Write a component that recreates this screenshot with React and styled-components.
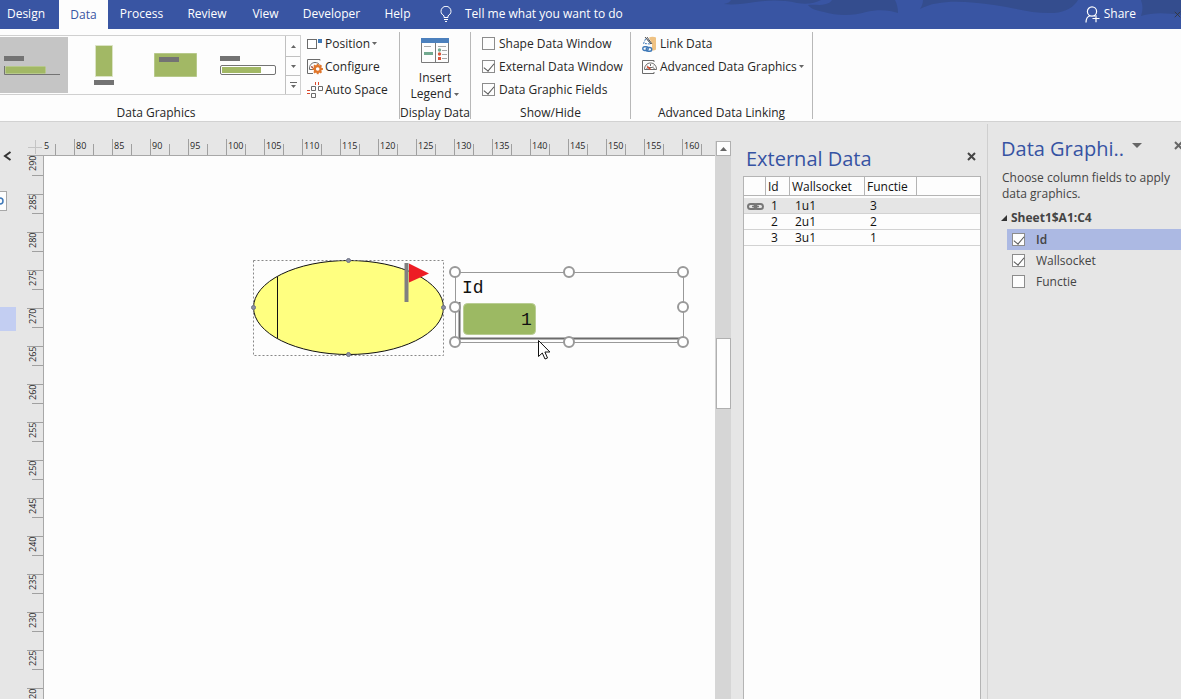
import React, { useState } from 'react';
import styled, { createGlobalStyle, css } from 'styled-components';

const GlobalStyle = createGlobalStyle`
  * {
    box-sizing: border-box;
  }

  body {
    margin: 0;
    background: #e6e6e6;
    color: #262626;
    font-family: 'Open Sans', 'Noto Sans', sans-serif;
    font-size: 12px;
    line-height: 16px;
    overflow: hidden;
  }

  button {
    border: 0;
    padding: 0;
    background: none;
    color: inherit;
    font: inherit;
    white-space: nowrap;
  }
`;

const Window = styled.div`
  display: flex;
  flex-direction: column;
  height: 100vh;
`;

const TopBar = styled.header`
  position: relative;
  display: flex;
  height: 29px;
  flex: none;
  background: #3955a3;
  color: #fff;
`;

const Swirls = styled.svg`
  position: absolute;
  top: 0;
  right: 0;
`;

const TabList = styled.nav`
  display: flex;
`;

const Tab = styled.button`
  width: ${({ $width }) => $width}px;
  height: 28px;
  text-align: center;

  ${({ $active }) =>
    $active &&
    css`
      height: 29px;
      background: #fdfdfd;
      color: #3955a3;
    `}

  &:first-child {
    margin-right: 7px;
  }
`;

const TellMe = styled.button`
  display: flex;
  align-items: center;
  gap: 13px;
  height: 28px;
  margin-left: 16px;
`;

const Share = styled.button`
  position: relative;
  display: flex;
  align-items: center;
  gap: 4px;
  height: 28px;
  margin-left: auto;
  margin-right: 38px;
`;

const CornerClose = styled.button`
  position: relative;
  display: flex;
  align-items: center;
  width: 7px;
  height: 28px;
  overflow: hidden;
`;

const Ribbon = styled.section`
  display: flex;
  flex: none;
  height: 93px;
  padding-top: 3px;
  border-bottom: 1px solid #d2d2d2;
  background: #fdfdfd;
`;

const Group = styled.div`
  display: flex;
  flex-direction: column;
  justify-content: space-between;
  width: ${({ $width }) => $width}px;
  height: 87px;
  border-right: 1px solid #b8b8b8;
`;

const GroupBody = styled.div`
  display: flex;
`;

const GroupLabel = styled.div`
  height: 13px;
  width: ${({ $width }) => ($width ? `${$width}px` : 'auto')};
  line-height: 13px;
  text-align: center;
  white-space: nowrap;
`;

const Commands = styled.div`
  display: flex;
  flex-direction: column;
  padding-left: ${({ $indent }) => $indent}px;
`;

const Command = styled.button`
  display: flex;
  align-items: center;
  gap: 2px;
  height: 23px;
`;

const Gallery = styled.div`
  display: flex;
  height: 60px;
  margin-top: 3px;
  border: 1px solid #d0d0d0;
  border-left: 0;
`;

const GalleryItem = styled.button`
  display: flex;
  width: ${({ $width }) => $width}px;
  margin: 1px 0;
  background: ${({ $active }) => ($active ? '#c5c5c5' : 'none')};
`;

const Spinner = styled.div`
  display: grid;
  grid-template-rows: 20px 19px 19px;
  width: 15px;
  border-left: 1px solid #c0c0c0;
`;

const SpinButton = styled.button`
  display: flex;
  align-items: center;
  justify-content: center;

  & + & {
    border-top: 1px solid #c0c0c0;
  }
`;

const LegendButton = styled.button`
  display: flex;
  flex-direction: column;
  align-items: center;
  width: 100%;
  padding-top: 6px;
`;

const LegendText = styled.span`
  display: flex;
  align-items: center;
  gap: 3px;
  margin-top: ${({ $top }) => $top || 0}px;
`;

const CheckLabel = styled.label`
  display: flex;
  align-items: center;
  gap: ${({ $gap }) => $gap || 4}px;
  height: ${({ $height }) => $height || 23}px;
  white-space: nowrap;
`;

const CheckBox = styled.input`
  appearance: none;
  display: flex;
  justify-content: center;
  width: 13px;
  height: 13px;
  flex: none;
  margin: 0;
  border: 1px solid #8c8c8c;
  background: #fdfdfd;

  &:checked::before {
    content: '';
    width: 5px;
    height: 9px;
    border: solid #555;
    border-width: 0 1px 1px 0;
    transform: rotate(40deg);
  }
`;

const Workspace = styled.main`
  display: flex;
  flex: 1;
  min-height: 0;
`;

const ShapesStrip = styled.aside`
  display: flex;
  flex-direction: column;
  align-items: flex-start;
  width: 27px;
  flex: none;
  padding-top: 29px;
`;

const ExpandButton = styled.button`
  display: flex;
  padding-left: 3px;
`;

const SearchStub = styled.button`
  display: flex;
  align-items: center;
  width: 7px;
  height: 20px;
  margin-top: 30px;
  border: 1px solid #a8a8a8;
  border-left: 0;
  background: #fdfdfd;
`;

const StencilStub = styled.div`
  width: 16px;
  height: 24px;
  margin-top: 96px;
  background: #c3cef2;
`;

const Drawing = styled.section`
  display: grid;
  grid-template-columns: 17px 1fr;
  grid-template-rows: 34px 1fr;
  flex: 1;
  min-width: 0;
  min-height: 0;
`;

const RulerCorner = styled.div`
  display: flex;
  align-items: flex-end;
  border-bottom: 1px solid #a8a8a8;
`;

const TopRuler = styled.div`
  display: flex;
  align-items: flex-end;
  height: 34px;
  overflow: hidden;
  border-bottom: 1px solid #a8a8a8;
  font-size: 9px;
  line-height: 14px;
`;

const TopMajor = styled.div`
  flex: none;
  width: 19px;
  height: 16px;
  padding-left: 1px;
  border-left: 1px solid #a0a0a0;

  &:first-child {
    width: 11px;
    padding-left: 0;
    border-left: 0;
  }
`;

const TopMinor = styled.div`
  flex: none;
  width: 19px;
  height: 11px;
  border-left: 1px solid #a0a0a0;
`;

const SideRuler = styled.div`
  display: flex;
  flex-direction: column;
  align-items: flex-end;
  min-height: 0;
  overflow: hidden;
  border-right: 1px solid #a8a8a8;
  font-size: 9px;
  line-height: 12px;
`;

const SideMajor = styled.div`
  display: flex;
  flex: none;
  width: 16px;
  height: 19px;
  border-top: 1px solid #a0a0a0;

  &:first-child {
    border-top: 0;
  }
`;

const SideText = styled.span`
  height: 18px;
  writing-mode: vertical-rl;
  transform: rotate(180deg);
  text-align: right;
`;

const SideMinor = styled.div`
  flex: none;
  width: 11px;
  height: 19px;
  border-top: 1px solid #a0a0a0;
`;

const Canvas = styled.div`
  position: relative;
  overflow: hidden;
  background: #fdfdfd;
`;

const CanvasDrawing = styled.svg`
  position: absolute;
  left: 200px;
  top: 96px;
`;

const CanvasText = styled.span`
  position: absolute;
  left: ${({ $left }) => $left}px;
  top: ${({ $top }) => $top}px;
  color: #111;
  font-family: 'Liberation Mono', monospace;
  font-size: 18px;
  line-height: 24px;
`;

const ScrollBar = styled.div`
  display: flex;
  flex-direction: column;
  width: 16px;
  flex: none;
  margin-top: 19px;
  padding-left: 1px;
  background: #d6d6d6;
`;

const ScrollArrow = styled.button`
  display: flex;
  align-items: center;
  justify-content: center;
  height: 15px;
  border: 1px solid #b0b0b0;
  background: #fdfdfd;
`;

const ScrollThumb = styled.div`
  height: 71px;
  margin-top: 182px;
  border: 1px solid #b0b0b0;
  background: #fdfdfd;
`;

const DataPane = styled.aside`
  display: flex;
  flex-direction: column;
  width: 238px;
  flex: none;
  margin-left: 12px;
`;

const PaneHeader = styled.div`
  display: flex;
  align-items: center;
  justify-content: space-between;
  height: 54px;
  padding: 19px 5px 0 3px;
`;

const PaneTitle = styled.h2`
  margin: 0;
  color: #3653a3;
  font-size: 20px;
  font-weight: 400;
  line-height: 28px;
  white-space: nowrap;
`;

const IconButton = styled.button`
  display: flex;
  align-items: center;
`;

const PaneClose = styled(IconButton)`
  padding-bottom: 5px;
`;

const TableFrame = styled.div`
  flex: 1;
  border: 1px solid #b4b4b4;
  border-bottom: 0;
  background: #fdfdfd;
`;

const DataTable = styled.table`
  width: 100%;
  border-spacing: 0;
  table-layout: fixed;
  color: #111;
  line-height: 15px;

  th {
    height: 19px;
    padding: 0 0 0 2px;
    border-right: 1px solid #b4b4b4;
    border-bottom: 1px solid #b4b4b4;
    font-weight: 400;
    text-align: left;
  }

  th:last-child {
    border-right: 0;
  }

  tbody::before {
    content: '';
    display: table-row;
    height: 2px;
  }

  td {
    height: 16px;
    padding: 0 0 0 5px;
    border-bottom: 1px solid #d2d2d2;
  }

  td:first-child {
    padding-left: 3px;
  }
`;

const Row = styled.tr`
  background: ${({ $linked }) => ($linked ? '#e5e5e5' : 'transparent')};
`;

const Column = styled.col`
  width: ${({ $width }) => ($width ? `${$width}px` : 'auto')};
`;

const FieldsPane = styled.aside`
  width: 194px;
  flex: none;
  margin: 2px 0 0 6px;
  padding-top: 11px;
  border-left: 1px solid #cfcfcf;
  overflow: hidden;
  color: #444;
`;

const FieldsHeader = styled.div`
  display: flex;
  align-items: flex-start;
  padding-left: 13px;
`;

const HeaderButtons = styled.div`
  display: flex;
  gap: 32px;
  margin-left: auto;
  margin-right: -2px;
  padding-top: 6px;
`;

const Hint = styled.p`
  margin: 7px 8px 7px 14px;
`;

const Source = styled.button`
  display: flex;
  align-items: center;
  gap: 4px;
  height: 18px;
  margin-left: 13px;
  font-weight: 700;
`;

const FieldRow = styled.div`
  height: 21px;
  margin-left: 19px;
  padding-left: 5px;
  background: ${({ $active }) => ($active ? '#acb9e3' : 'none')};
  font-weight: ${({ $active }) => ($active ? 600 : 400)};
`;

const FieldList = styled.div`
  padding-top: 2px;
`;

const Caret = ({ size = 5, color = '#666' }) => (
  <svg width={size} height={Math.ceil(size / 2)} viewBox="0 0 10 5" preserveAspectRatio="none">
    <path d="M0 0h10L5 5z" fill={color} />
  </svg>
);

const UpCaret = () => (
  <svg width="7" height="4" viewBox="0 0 7 4">
    <path d="M0 4h7L3.500 0z" fill="#666" />
  </svg>
);

const CloseIcon = ({ color = '#444', weight = 2 }) => (
  <svg width="9" height="9" viewBox="0 0 9 9">
    <path d="M1 1l7 7M8 1L1 8" stroke={color} strokeWidth={weight} />
  </svg>
);

const BulbIcon = () => (
  <svg width="12" height="16" viewBox="0 0 12 16" fill="none" stroke="#fff">
    <path d="M4 11.500V9.800C2.400 8.800 1 7.500 1 5.300a5 5 0 0 1 10 0c0 2.200-1.400 3.500-3 4.500v1.700zM4 13.500h4M5 15.500h2" />
  </svg>
);

const PersonIcon = () => (
  <svg width="15" height="17" viewBox="0 0 15 17" fill="none" stroke="#fff" strokeWidth="1.200">
    <circle cx="7" cy="5.500" r="4.600" />
    <path d="M1 16.500c0-3.500 1.400-6 4-6.800M9 9.500l1 .8M7.500 12.500h7M11 9.200v7" />
  </svg>
);

const PositionIcon = () => (
  <svg width="16" height="16" viewBox="0 0 16 16">
    <rect x=".5" y="3.500" width="9" height="9" fill="#fff" stroke="#6b6b6b" />
    <path d="M11 3h4v4h-4z" fill="#3f79b8" />
  </svg>
);

const GEAR = Array.from({ length: 8 }, (_, i) => i * 45);

const ConfigureIcon = () => (
  <svg width="16" height="16" viewBox="0 0 16 16" fill="none">
    <path d="M13 1.500V.5H.5v14H6" stroke="#6b6b6b" />
    <path d="M2.500 10.500C2 6 5 3.500 8 3.500c2 0 3.500.8 4.500 2M2.500 10.500H6M4 7.500l3 2" stroke="#6b6b6b" />
    <path d="M4 8h2" stroke="#d8492c" />
    <g fill="#e0762b">
      {GEAR.map((angle) => (
        <path key={angle} d="M9.700 4.800h2v3h-2z" transform={`rotate(${angle} 10.700 10)`} />
      ))}
    </g>
    <circle cx="10.700" cy="10" r="2.900" fill="#fff" stroke="#e0762b" strokeWidth="2.200" />
  </svg>
);

const AutoSpaceIcon = () => (
  <svg width="16" height="16" viewBox="0 0 16 16" fill="none">
    <path d="M4.500 4.500h4v4h-4zM11.500 4.500h4v4h-4zM4.500 11.500h4v4h-4z" stroke="#6b6b6b" />
    <path d="M8.500 0v3M11.500 0v3M0 8.500h3M0 11.500h3" stroke="#d8492c" />
  </svg>
);

const LegendIcon = () => (
  <svg width="28" height="26" viewBox="0 0 28 26">
    <path d="M.5.5h27v24H.5zM14.500 5v19" fill="#fdfdfd" stroke="#7a7a7a" />
    <path d="M0 0h28v5H0z" fill="#4c80bd" />
    <path d="M3 8.500h7M17 8.500h8M21 12.500h5M21 16.500h5M21 20.500h5" stroke="#a8a8a8" />
    <path d="M3 14h9v3H3z" fill="#72a98f" />
    <circle cx="18.500" cy="12" r="1.700" fill="#72a98f" />
    <circle cx="18.500" cy="16" r="1.700" fill="#d8553a" />
    <path d="M17 19h3v3h-3z" fill="#d8553a" />
  </svg>
);

const LinkDataIcon = () => (
  <svg width="16" height="16" viewBox="0 0 16 16" fill="none">
    <path d="M7 1.500c2-1 5-1 7 0v12c-1 .8-2 1-4 1V8z" fill="#efc283" />
    <path d="M1.500 7.500L4 2l5 6z" stroke="#3f79b8" strokeDasharray="2 1" />
    <path d="M3 1l6 7M5 1l5 7" stroke="#555" />
    <rect x=".8" y="10.800" width="5.400" height="3.700" rx="1.800" stroke="#3f79b8" strokeWidth="1.400" />
    <rect x="4.300" y="11.500" width="5.400" height="3.700" rx="1.800" stroke="#3f79b8" strokeWidth="1.400" />
  </svg>
);

const GaugeIcon = () => (
  <svg width="16" height="16" viewBox="0 0 16 16" fill="none">
    <path d="M12 3V1.500H.5v13H12V13" stroke="#6b6b6b" />
    <path d="M2.500 10.500c0-4 2.500-6.500 6-6.500s6 2.500 6 6.500z" fill="#fff" stroke="#6b6b6b" />
    <path d="M4.500 10.500c0-1 1-2 2-2h4c1 0 2 1 2 2M8.500 5v2M5 6.500l1 1M12 6.500l-1 1" stroke="#6b6b6b" />
    <path d="M5 7.500l3.500 2.800" stroke="#d8492c" strokeWidth="1.500" />
  </svg>
);

const ChainIcon = () => (
  <svg width="17" height="7" viewBox="0 0 17 7" fill="none" stroke="#777">
    <rect x="1" y="1" width="8.500" height="5" rx="2.500" strokeWidth="2" />
    <rect x="7.500" y="1" width="8.500" height="5" rx="2.500" strokeWidth="2" />
    <path d="M5 3.500h7" strokeWidth="1.500" />
  </svg>
);

const GALLERY_ITEMS = [
  {
    name: 'Bar with baseline',
    width: 68,
    art: (
      <>
        <path d="M4 19h20v5H4z" fill="#737373" />
        <path d="M4.500 29v8.500H60" fill="none" stroke="#737373" />
        <rect x="5.500" y="29.500" width="40" height="7" rx="1" fill="#a2b865" stroke="#b7c98b" />
      </>
    ),
  },
  {
    name: 'Column',
    width: 72,
    art: (
      <>
        <path d="M27.500 8.500h17v31h-17z" fill="#a2b865" stroke="#dbe3c4" />
        <path d="M26 43h20v5H26z" fill="#737373" />
      </>
    ),
  },
  {
    name: 'Block',
    width: 72,
    art: (
      <>
        <path d="M14.500 16.500h42v23h-42z" fill="#a2b865" stroke="#b7c98b" />
        <path d="M19 20h20v5H19z" fill="#737373" />
      </>
    ),
  },
  {
    name: 'Progress bar',
    width: 73,
    art: (
      <>
        <path d="M8 19h20v5H8z" fill="#737373" />
        <rect x="8.500" y="28.500" width="55" height="9" rx="1.500" fill="#fff" stroke="#737373" />
        <path d="M10 30h39v6H10z" fill="#a2b865" />
      </>
    ),
  },
];

const TABS = [
  { name: 'Design', width: 52 },
  { name: 'Data', width: 49 },
  { name: 'Process', width: 67 },
  { name: 'Review', width: 64 },
  { name: 'View', width: 53 },
  { name: 'Developer', width: 79 },
  { name: 'Help', width: 53 },
];

const TOP_VALUES = Array.from({ length: 17 }, (_, i) => 80 + i * 5);
const SIDE_VALUES = Array.from({ length: 14 }, (_, i) => 290 - i * 5);

const RECORDS = [
  { id: 1, wallsocket: '1u1', functie: 3, linked: true },
  { id: 2, wallsocket: '2u1', functie: 2 },
  { id: 3, wallsocket: '3u1', functie: 1 },
];

const HANDLES = [
  [211, 20],
  [325, 20],
  [439, 20],
  [211, 55],
  [439, 55],
  [211, 90],
  [325, 90],
  [439, 90],
];

const ANCHORS = [
  [104.5, 8.5],
  [9.5, 55.5],
  [199.5, 55.5],
  [104.5, 102.5],
];

const Diagram = () => (
  <CanvasDrawing width="460" height="120" viewBox="0 0 460 120" fill="none">
    <ellipse cx="104.500" cy="55.500" rx="95" ry="47" fill="#ffff80" stroke="#111" />
    <path d="M33.500 25v61" stroke="#111" />
    <path d="M9.500 8.500h190v95H9.500z" stroke="#888" strokeDasharray="2 2" />
    <path d="M160.500 11h4v39h-4z" fill="#808080" />
    <path d="M165 11.500l20 10-20 9z" fill="#ed1c24" />
    {ANCHORS.map(([x, y]) => (
      <circle key={`${x}-${y}`} cx={x} cy={y} r="2" fill="#8d91a3" stroke="#6d7184" />
    ))}
    <path d="M211.500 20.500h228v70h-228z" stroke="#999" />
    <path d="M215.500 50v36.500H439" stroke="#6b6b6b" strokeWidth="2" />
    <rect x="219.500" y="51.500" width="72" height="31" rx="4" fill="#9cb963" stroke="#b9cd93" />
    {HANDLES.map(([x, y]) => (
      <circle key={`${x}-${y}`} cx={x} cy={y} r="5" fill="#fff" stroke="#999" strokeWidth="2" />
    ))}
    <path
      d="M294.500 88.500v16l3.800-3.500 2.700 6 2.500-1-2.600-6h5z"
      fill="#fff"
      stroke="#111"
    />
  </CanvasDrawing>
);

const App = () => {
  const [windows, setWindows] = useState({
    'Shape Data Window': false,
    'External Data Window': true,
    'Data Graphic Fields': true,
  });
  const [fields, setFields] = useState({ Id: true, Wallsocket: true, Functie: false });

  return (
    <>
      <GlobalStyle />
      <Window>
        <TopBar>
          <Swirls width="470" height="29" viewBox="0 0 470 29" fill="#344d8e">
            <path d="M13 4c4-1 6-2 7-4h90c-6 3-14 5-24 3-14-3-28-3-42-1-12 2-22 3-31 2z" />
            <path d="M97 5c6-1 12 1 18-1 3-1 5-2 6-4h63c2 4 3 8 3 13-8-3-20-4-32-1-12 4-30 4-42 0-10-2-14-4-16-7z" />
            <path d="M209 9c2-3 3-6 3-9h155c-4 7-12 12-24 13-22 1-38-5-60-8-28-4-56-6-74 4z" />
            <path d="M430 16c2-6 2-10 0-16h40v15c-14-2-28-3-40 1z" />
          </Swirls>
          <TabList>
            {TABS.map((tab) => (
              <Tab key={tab.name} $width={tab.width} $active={tab.name === 'Data'}>
                {tab.name}
              </Tab>
            ))}
          </TabList>
          <TellMe>
            <BulbIcon />
            Tell me what you want to do
          </TellMe>
          <Share>
            <PersonIcon />
            Share
          </Share>
          <CornerClose aria-label="Close">
            <CloseIcon color="#333" weight={1} />
          </CornerClose>
        </TopBar>

        <Ribbon>
          <Group $width={400}>
            <GroupBody>
              <Gallery>
                {GALLERY_ITEMS.map((item, index) => (
                  <GalleryItem key={item.name} aria-label={item.name} $width={item.width} $active={index === 0}>
                    <svg width={item.width} height="56" viewBox={`0 0 ${item.width} 56`}>
                      {item.art}
                    </svg>
                  </GalleryItem>
                ))}
                <Spinner>
                  <SpinButton aria-label="Previous row">
                    <svg width="5" height="3" viewBox="0 0 10 6">
                      <path d="M0 6h10L5 0z" fill="#666" />
                    </svg>
                  </SpinButton>
                  <SpinButton aria-label="Next row">
                    <Caret />
                  </SpinButton>
                  <SpinButton aria-label="More">
                    <svg width="7" height="7" viewBox="0 0 7 7">
                      <path d="M0 0h7v1H0zM1 3h5L3.500 6z" fill="#666" />
                    </svg>
                  </SpinButton>
                </Spinner>
              </Gallery>
              <Commands $indent={6}>
                <Command>
                  <PositionIcon />
                  Position
                  <Caret />
                </Command>
                <Command>
                  <ConfigureIcon />
                  Configure
                </Command>
                <Command>
                  <AutoSpaceIcon />
                  Auto Space
                </Command>
              </Commands>
            </GroupBody>
            <GroupLabel $width={312}>Data Graphics</GroupLabel>
          </Group>

          <Group $width={71}>
            <LegendButton>
              <LegendIcon />
              <LegendText $top={6}>Insert</LegendText>
              <LegendText>
                Legend <Caret />
              </LegendText>
            </LegendButton>
            <GroupLabel>Display Data</GroupLabel>
          </Group>

          <Group $width={160}>
            <Commands $indent={11}>
              {Object.keys(windows).map((name) => (
                <CheckLabel key={name}>
                  <CheckBox
                    type="checkbox"
                    checked={windows[name]}
                    onChange={() => setWindows({ ...windows, [name]: !windows[name] })}
                  />
                  {name}
                </CheckLabel>
              ))}
            </Commands>
            <GroupLabel>Show/Hide</GroupLabel>
          </Group>

          <Group $width={182}>
            <Commands $indent={11}>
              <Command>
                <LinkDataIcon />
                Link Data
              </Command>
              <Command>
                <GaugeIcon />
                Advanced Data Graphics
                <Caret />
              </Command>
            </Commands>
            <GroupLabel>Advanced Data Linking</GroupLabel>
          </Group>
        </Ribbon>

        <Workspace>
          <ShapesStrip>
            <ExpandButton aria-label="Expand shapes">
              <svg width="9" height="10" viewBox="0 0 9 10" fill="none">
                <path d="M7.500 1L2 5l5.500 4" stroke="#333" strokeWidth="2" />
              </svg>
            </ExpandButton>
            <SearchStub aria-label="Search shapes">
              <svg width="4" height="8" viewBox="0 0 4 8" fill="none">
                <path d="M0 1c2 0 3 1 3 3S2 7 0 7" stroke="#3f79b8" strokeWidth="1.500" />
              </svg>
            </SearchStub>
            <StencilStub />
          </ShapesStrip>

          <Drawing>
            <RulerCorner>
              <svg width="17" height="16" viewBox="0 0 17 16">
                <path d="M1 8.500h14M8.500 1v14" stroke="#c4c4c4" />
              </svg>
            </RulerCorner>
            <TopRuler>
              <TopMajor>5</TopMajor>
              <TopMinor />
              {TOP_VALUES.map((value) => (
                <React.Fragment key={value}>
                  <TopMajor>{value}</TopMajor>
                  <TopMinor />
                </React.Fragment>
              ))}
            </TopRuler>
            <SideRuler>
              {SIDE_VALUES.map((value) => (
                <React.Fragment key={value}>
                  <SideMajor>
                    <SideText>{value}</SideText>
                  </SideMajor>
                  <SideMinor />
                </React.Fragment>
              ))}
              <SideMajor>
                <SideText>20</SideText>
              </SideMajor>
            </SideRuler>
            <Canvas>
              <Diagram />
              <CanvasText $left={418} $top={120}>Id</CanvasText>
              <CanvasText $left={477} $top={152}>1</CanvasText>
            </Canvas>
          </Drawing>

          <ScrollBar>
            <ScrollArrow aria-label="Scroll up">
              <UpCaret />
            </ScrollArrow>
            <ScrollThumb />
          </ScrollBar>

          <DataPane>
            <PaneHeader>
              <PaneTitle>External Data</PaneTitle>
              <PaneClose aria-label="Close external data">
                <CloseIcon />
              </PaneClose>
            </PaneHeader>
            <TableFrame>
              <DataTable>
                <colgroup>
                  <Column $width={22} />
                  <Column $width={24} />
                  <Column $width={75} />
                  <Column $width={52} />
                  <Column />
                </colgroup>
                <thead>
                  <tr>
                    <th />
                    <th>Id</th>
                    <th>Wallsocket</th>
                    <th>Functie</th>
                    <th />
                  </tr>
                </thead>
                <tbody>
                  {RECORDS.map((record) => (
                    <Row key={record.id} $linked={record.linked}>
                      <td>{record.linked && <ChainIcon />}</td>
                      <td>{record.id}</td>
                      <td>{record.wallsocket}</td>
                      <td>{record.functie}</td>
                      <td />
                    </Row>
                  ))}
                </tbody>
              </DataTable>
            </TableFrame>
          </DataPane>

          <FieldsPane>
            <FieldsHeader>
              <PaneTitle>Data Graphi..</PaneTitle>
              <HeaderButtons>
                <IconButton aria-label="Pane options">
                  <Caret size={10} />
                </IconButton>
                <IconButton aria-label="Close pane">
                  <CloseIcon color="#666" />
                </IconButton>
              </HeaderButtons>
            </FieldsHeader>
            <Hint>Choose column fields to apply data graphics.</Hint>
            <Source>
              <svg width="6" height="6" viewBox="0 0 6 6">
                <path d="M6 0v6H0z" fill="#333" />
              </svg>
              Sheet1$A1:C4
            </Source>
            <FieldList>
              {Object.keys(fields).map((name) => (
                <FieldRow key={name} $active={name === 'Id'}>
                  <CheckLabel $gap={11} $height={21}>
                    <CheckBox
                      type="checkbox"
                      checked={fields[name]}
                      onChange={() => setFields({ ...fields, [name]: !fields[name] })}
                    />
                    {name}
                  </CheckLabel>
                </FieldRow>
              ))}
            </FieldList>
          </FieldsPane>
        </Workspace>
      </Window>
    </>
  );
};

export default App;
